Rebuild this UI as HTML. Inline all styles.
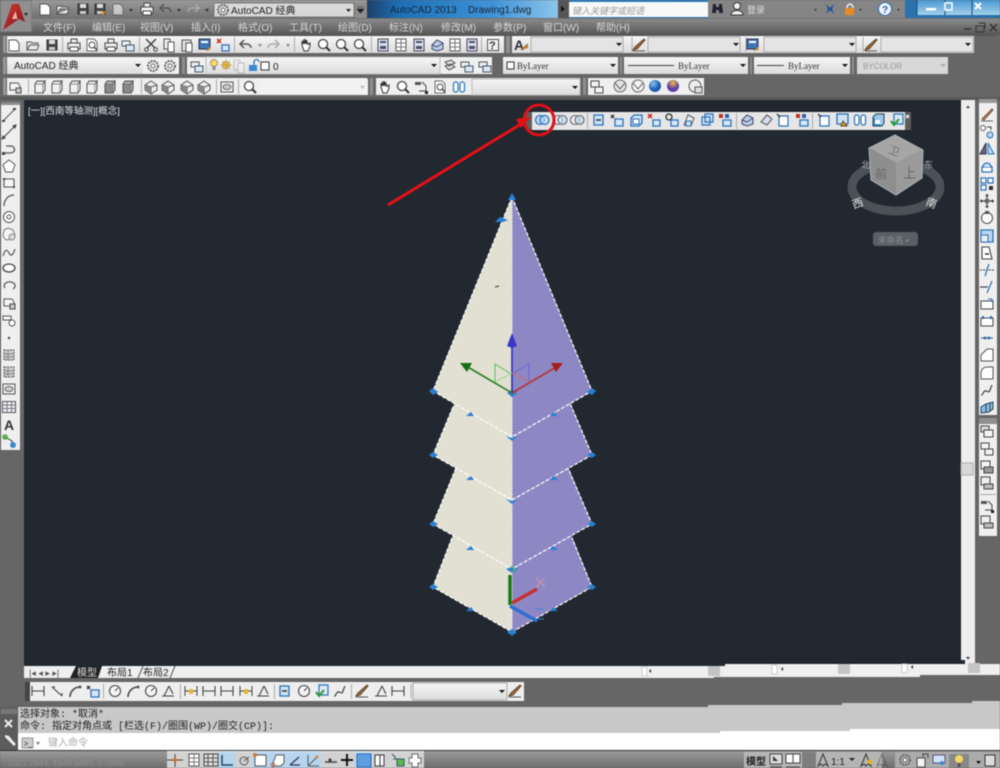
<!DOCTYPE html>
<html><head><meta charset="utf-8"><title>AutoCAD 2013</title>
<style>
html,body{margin:0;padding:0;background:#666;width:1000px;height:768px;overflow:hidden}
svg{display:block;filter:blur(.5px)}
text{font-family:"Liberation Sans","Noto Sans CJK SC",sans-serif}
.m{font-size:10px;fill:#d6d6d6}
.d{font-size:9px;fill:#333;font-family:"Liberation Serif","Noto Sans CJK SC",serif}
.c{font-size:10px;fill:#222;font-family:"Liberation Mono","Noto Sans CJK SC",monospace}
</style></head><body>
<svg width="1000" height="768" viewBox="0 0 1000 768" xmlns="http://www.w3.org/2000/svg">
<defs>
<linearGradient id="gb" x1="0" y1="0" x2="0" y2="1"><stop offset="0" stop-color="#8a8a8a"/><stop offset="1" stop-color="#565656"/></linearGradient>
<linearGradient id="gs" x1="0" y1="0" x2="0" y2="1"><stop offset="0" stop-color="#f6f6f6"/><stop offset="1" stop-color="#dcdcdc"/></linearGradient>
<linearGradient id="gt" x1="0" y1="0" x2="1" y2="0"><stop offset="0" stop-color="#1d3f66"/><stop offset=".05" stop-color="#1c6fb4"/><stop offset=".2" stop-color="#3f93d6"/><stop offset=".3" stop-color="#8cc4ea"/><stop offset=".32" stop-color="#2a7cc0"/><stop offset="1" stop-color="#2b6fa8"/></linearGradient>
<linearGradient id="gw" x1="0" y1="0" x2="0" y2="1"><stop offset="0" stop-color="#4a98d2"/><stop offset="1" stop-color="#a4d0ec"/></linearGradient>
<linearGradient id="ga" x1="0" y1="0" x2="1" y2="1"><stop offset="0" stop-color="#d83a38"/><stop offset="1" stop-color="#7a1414"/></linearGradient>
<linearGradient id="gc" x1="0" y1="0" x2="0" y2="1"><stop offset="0" stop-color="#9a9a9a"/><stop offset="1" stop-color="#6e6e6e"/></linearGradient>
<radialGradient id="sb" cx=".35" cy=".3"><stop offset="0" stop-color="#8fc4f0"/><stop offset="1" stop-color="#1c5fb0"/></radialGradient>
<radialGradient id="sy" cx=".5" cy=".25"><stop offset="0" stop-color="#f5c040"/><stop offset="1" stop-color="#5a3fa8"/></radialGradient>
<g id="doc"><path d="M3 3h7l3 3v8H3z" fill="#fff" stroke="#555"/></g>
<g id="open"><path d="M2 13V5h4l1 1h6v2H5l-3 5h10l2-5" fill="#e8e8e8" stroke="#555"/></g>
<g id="save"><path d="M3 3h10v10H3z" fill="#444" stroke="#333"/><path d="M5 3h6v4H5z" fill="#ddd"/><path d="M5 10h6v3H5z" fill="#ccc"/></g>
<g id="print"><path d="M5 2h6v4H5zM2 6h12v6H2z" fill="#eee" stroke="#444"/><path d="M4 10h8v4H4z" fill="#fff" stroke="#444"/></g>
<g id="prev"><path d="M3 2h7l3 3v9H3z" fill="#fff" stroke="#666"/><circle cx="8" cy="8" r="3" fill="none" stroke="#444"/><path d="M10 10l3 3" stroke="#444" stroke-width="1.5"/></g>
<g id="cut"><path d="M3 2l9 9M13 2L4 11" stroke="#444" stroke-width="1.5" fill="none"/><circle cx="3.500" cy="12.500" r="1.800" fill="none" stroke="#444"/><circle cx="12.500" cy="12.500" r="1.800" fill="none" stroke="#444"/></g>
<g id="copy"><path d="M3 2h6v10H3z" fill="#eee" stroke="#555"/><path d="M7 5h6v10H7z" fill="#fff" stroke="#555"/></g>
<g id="paste"><path d="M3 3h9v11H3z" fill="#ddd" stroke="#555"/><path d="M7 6h6v9H7z" fill="#fff" stroke="#555"/></g>
<g id="match"><path d="M2 2h11v10H2z" fill="#3f76b8" stroke="#334"/><path d="M4 4h7v2H4z" fill="#fff"/><path d="M8 14l6-5-1 4z" fill="#c88a38"/></g>
<g id="undo"><path d="M6 3L2 7l4 4M2 7h7a4 4 0 0 1 4 4" fill="none" stroke="#555" stroke-width="1.500"/></g>
<g id="redo"><path d="M10 3l4 4-4 4M14 7H7a4 4 0 0 0-4 4" fill="none" stroke="#aaa" stroke-width="1.500"/></g>
<g id="hand"><path d="M4 8V4l1.500 3V2.500L7 7V2l1.500 5V3L10 7.500l2-1.500v3l-2 5H6z" fill="#fff" stroke="#333"/></g>
<g id="zoom"><circle cx="7" cy="7" r="4.500" fill="#fff" stroke="#444" stroke-width="1.300"/><path d="M10 10l4 4" stroke="#333" stroke-width="2"/></g>
<g id="box"><path d="M2.500 2.500h11v11h-11z" fill="#f4f4f4" stroke="#555"/></g>
<g id="panel"><path d="M3 2h10v12H3z" fill="#dde" stroke="#445"/><path d="M5 4h6v2H5zM5 9h6v3H5z" fill="#456"/></g>
<g id="grid"><path d="M3 2h10v12H3z" fill="#fff" stroke="#555"/><path d="M3 6h10M3 10h10M8 2v12" stroke="#777"/></g>
<g id="cube"><path d="M3 5h8v9H3z" fill="#f0f0f0" stroke="#555"/><path d="M3 5l2-3h8l-2 3M11 5l2-3v9l-2 3" fill="#ddd" stroke="#555"/></g>
<g id="cubed"><path d="M3 5h8v9H3z" fill="#888" stroke="#555"/><path d="M3 5l2-3h8l-2 3M11 5l2-3v9l-2 3" fill="#aaa" stroke="#555"/></g>
<g id="iso"><path d="M8 2l6 4v5l-6 4-6-4V6z" fill="#eee" stroke="#555"/><path d="M8 8l6-2M8 8L2 6M8 8v7" stroke="#555" fill="none"/><path d="M8 8l-6-2v5l6 4z" fill="#888"/></g>
<g id="brush"><path d="M2 13l4-1 8-9-1-1-9 8z" fill="#b56a2a" stroke="#543"/><path d="M2 14h12" stroke="#555"/></g>
<g id="gear"><circle cx="8" cy="8" r="5" fill="none" stroke="#666" stroke-width="2" stroke-dasharray="2 1"/><circle cx="8" cy="8" r="2" fill="#fff" stroke="#666"/></g>
<g id="layer"><path d="M2 4h8v5H2z" fill="#eee" stroke="#456"/><path d="M6 8h8v6H6z" fill="#dbe8f5" stroke="#456"/></g>
<g id="layer2"><path d="M3 4l6-2 4 3-6 3zM3 8l6-2 4 3-6 3z" fill="#ddd" stroke="#555"/></g>
<g id="venn"><circle cx="6" cy="8" r="4.500" fill="#bcd8f0" stroke="#2a70b8" stroke-width="1.200"/><circle cx="10.500" cy="8" r="4.500" fill="#bcd8f0" fill-opacity=".6" stroke="#2a70b8" stroke-width="1.200"/></g>
<g id="venn2"><circle cx="6" cy="8" r="4.500" fill="#f0f0f0" stroke="#667" stroke-width="1.100"/><circle cx="10.500" cy="8" r="4.500" fill="#c5d5e5" fill-opacity=".7" stroke="#667" stroke-width="1.100"/></g>
<g id="s1"><path d="M3 3h9v10H3z" fill="#cfe3f5" stroke="#2a70b8" stroke-width="1.300"/><path d="M5 8h5" stroke="#333" stroke-width="1.500"/></g>
<g id="s2"><path d="M2 3l3 3M5 3L2 6" stroke="#333" stroke-width="1.300"/><path d="M6 7h8v7H6z" fill="#d8e8f6" stroke="#2a70b8" stroke-width="1.300"/></g>
<g id="s3"><path d="M3 6l3-3h8v8l-3 3H3z" fill="#cfe3f5" stroke="#2a70b8" stroke-width="1.300"/><path d="M5 7h6v5H5z" fill="#fff" stroke="#2a70b8"/></g>
<g id="s4"><path d="M2 2l4 4M6 2L2 6" stroke="#d02020" stroke-width="1.500"/><path d="M7 8h7v6H7z" fill="#d8e8f6" stroke="#2a70b8" stroke-width="1.300"/></g>
<g id="s5"><circle cx="5" cy="5" r="3" fill="none" stroke="#333" stroke-width="1.300"/><path d="M7 8h7v6H7z" fill="#d8e8f6" stroke="#2a70b8" stroke-width="1.300"/></g>
<g id="s6"><path d="M3 13l4-10 6 3-3 8z" fill="#e5eef8" stroke="#555"/><path d="M5 9h5v5H5z" fill="#cfe3f5" stroke="#2a70b8"/></g>
<g id="s7"><path d="M6 2h8v8H6zM3 5h8v8H3z" fill="#cfe3f5" stroke="#2a70b8" stroke-width="1.200"/></g>
<g id="s8"><path d="M2 2h4v4H2z" fill="#c03020"/><path d="M8 2h4v4H8z" fill="#3060b0"/><path d="M6 8h8v6H6z" fill="#d8e8f6" stroke="#2a70b8" stroke-width="1.300"/></g>
<g id="s9"><path d="M3 8l5-5 6 3v6l-6 2-5-2z" fill="#b8d0e8" stroke="#446"/><path d="M3 8l5 2 6-4" fill="none" stroke="#446"/></g>
<g id="s10"><path d="M3 10l6-7 5 4-5 6z" fill="#d5dde8" stroke="#555"/></g>
<g id="s11"><path d="M4 4h9v10H4z" fill="#fff" stroke="#2a70b8" stroke-width="1.200"/><path d="M2 2l3 3" stroke="#333" stroke-width="1.300"/></g>
<g id="s12"><path d="M3 2h11v10H3z" fill="#cfe3f5" stroke="#2a70b8" stroke-width="1.300"/><path d="M9 9l4 5H7z" fill="#e8a020" stroke="#642"/></g>
<g id="s13"><rect x="2.500" y="3" width="4.500" height="10" rx="2" fill="#fff" stroke="#2a70b8" stroke-width="1.200"/><rect x="9" y="3" width="4.500" height="10" rx="2" fill="#fff" stroke="#2a70b8" stroke-width="1.200"/></g>
<g id="s14"><path d="M3 5h9v9H3z" fill="#3a8ad0" stroke="#245"/><path d="M3 5l3-3h8v9l-2 3" fill="#9cc6ea" stroke="#245"/><path d="M5 8h5v4H5z" fill="#fff"/></g>
<g id="s15"><path d="M5 2h9v10H5z" fill="#dceaf6" stroke="#2a70b8" stroke-width="1.200"/><path d="M2 9l3 4 5-6" fill="none" stroke="#2a9a30" stroke-width="2"/></g>
<g id="hline"><path d="M2 3v10M14 3v10M2 8h12" stroke="#444" fill="none" stroke-width="1.100"/></g>
<g id="dang"><path d="M3 4l10 9M3 4l3 0M13 13l0-3" stroke="#444" fill="none" stroke-width="1.100"/></g>
<g id="darc"><path d="M3 14a10 10 0 0 1 10-10" stroke="#444" fill="none" stroke-width="1.500"/><circle cx="13" cy="4" r="1.500" fill="#555"/></g>
<g id="circ"><circle cx="8" cy="8" r="5.500" fill="#f4f4f4" stroke="#444" stroke-width="1.100"/><path d="M8 8l3-3" stroke="#444"/></g>
<g id="tri"><path d="M2 13h12M9 3L4 13M9 3l4 8" stroke="#444" fill="none" stroke-width="1.100"/></g>
<g id="hy"><path d="M2 3v10M14 3v10M2 8h12" stroke="#444" fill="none"/><path d="M6 6h4v5H6z" fill="#e8b830"/></g>
<g id="l1"><path d="M2 14L14 2" stroke="#555" stroke-width="1"/><path d="M1 13h3v2H1zM12 1h3v2h-3z" fill="#444"/></g>
<g id="l2"><path d="M3 13L13 3M1 15l3-1-2-2zM15 1l-3 1 2 2z" stroke="#444" stroke-width="1" fill="#444"/></g>
<g id="l3"><path d="M2 12h8a3 3 0 0 0 0-7H5" fill="none" stroke="#555" stroke-width="1.300"/><path d="M1 11h3v3H1z" fill="#444"/></g>
<g id="l4"><path d="M8 2l6 4.500-2.500 7.500h-7L2 6.500z" fill="#fff" stroke="#555" stroke-width="1"/></g>
<g id="l5"><path d="M3 4h10v8H3z" fill="#f6f6f6" stroke="#555" stroke-width="1.100"/><path d="M2 3h2v2H2zM12 11h2v2h-2z" fill="#444"/></g>
<g id="l6"><path d="M3 14C3 8 7 3 13 3" fill="none" stroke="#555" stroke-width="1.300"/></g>
<g id="l7"><circle cx="8" cy="8" r="5.500" fill="#fff" stroke="#555"/><circle cx="8" cy="8" r="2" fill="none" stroke="#555"/></g>
<g id="l8"><path d="M3 4l4-2 5 2 2 5-3 4-6 1-3-4z" fill="#f6f6f6" stroke="#777"/><circle cx="11" cy="11" r="3" fill="#ddd" stroke="#888"/></g>
<g id="l9"><path d="M2 11c2-7 4-7 6-3s4 2 6-4" fill="none" stroke="#555" stroke-width="1.200"/></g>
<g id="l10"><ellipse cx="8" cy="8" rx="6" ry="4" fill="#fff" stroke="#444" stroke-width="1.300"/></g>
<g id="l11"><path d="M12 12a5.500 4 0 1 0-8-1" fill="none" stroke="#555" stroke-width="1.200"/></g>
<g id="l12"><path d="M3 11V4h8l2 3v4z" fill="#f6f6f6" stroke="#555"/><path d="M9 9h5v5H9z" fill="#ccc" stroke="#444"/></g>
<g id="l13"><path d="M2 8V4h8v4z" fill="#f6f6f6" stroke="#555"/><circle cx="11" cy="11" r="3" fill="#fff" stroke="#555"/></g>
<g id="l14"><circle cx="8" cy="8" r="1.200" fill="#444"/></g>
<g id="l15"><path d="M3 3h10v10H3z" fill="#ccc" stroke="#555" stroke-dasharray="2 1"/><path d="M3 7h10M3 10h10M7 3v10" stroke="#888"/></g>
<g id="l16"><path d="M2 3h12v10H2z" fill="#eee" stroke="#555"/><ellipse cx="8" cy="8" rx="4" ry="2.500" fill="#ccc" stroke="#666"/></g>
<g id="l17"><path d="M1.500 2.500h13v11h-13z" fill="#f0f0f0" stroke="#555"/><path d="M1.500 6h13M1.500 9.500h13M6 2.500v11M10.500 2.500v11" stroke="#778" fill="none"/></g>
<g id="l18"><circle cx="4" cy="4" r="2.800" fill="#58b048"/><path d="M6 5l5 3v3" fill="none" stroke="#333"/><circle cx="12" cy="12" r="3" fill="#3a88d0"/></g>
<g id="r1"><path d="M2 14h12" stroke="#666"/><path d="M3 12L13 2l1 1-9 10z" fill="#c88450" stroke="#754"/></g>
<g id="r2"><circle cx="4" cy="4" r="2.500" fill="#fff" stroke="#555"/><circle cx="11" cy="11" r="3" fill="#bcd8f0" stroke="#2a70b8"/><path d="M8 3h4v3" fill="none" stroke="#444"/></g>
<g id="r3"><path d="M7 2v11L1 13z" fill="#668" stroke="#334"/><path d="M9 2v11h6z" fill="#bcd8f0" stroke="#2a70b8"/></g>
<g id="r4"><path d="M3 8h10v5H3z" fill="#fff" stroke="#2a70b8" stroke-width="1.300"/><path d="M4 8a4 4 0 0 1 8 0" fill="#cfe3f5" stroke="#2a70b8" stroke-width="1.300"/></g>
<g id="r5"><path d="M2 2h5v5H2zM9 2h5v5H9zM2 9h5v5H2z" fill="#fff" stroke="#2a70b8" stroke-width="1.200"/><path d="M10 10h4v4h-4z" fill="#333"/></g>
<g id="r6"><path d="M8 1v14M1 8h14" stroke="#444" stroke-width="1.200"/><circle cx="8" cy="8" r="2.500" fill="#666"/><path d="M6 3l2-2 2 2zM6 13l2 2 2-2zM3 6L1 8l2 2zM13 6l2 2-2 2z" fill="#333"/></g>
<g id="r7"><circle cx="8" cy="8" r="5.500" fill="#fff" stroke="#555" stroke-width="1.100"/><path d="M6 1h4v3H6z" fill="#555"/></g>
<g id="r8"><path d="M2 2h12v12H2z" fill="#bcd8f0" stroke="#2a70b8" stroke-width="1.300"/><path d="M2 7h7v7H2z" fill="#eee" stroke="#2a70b8"/></g>
<g id="r9"><path d="M3 2h7l3 12H3z" fill="#fff" stroke="#444" stroke-width="1.100"/><path d="M6 9h4" stroke="#333" stroke-width="1.500"/></g>
<g id="r10"><path d="M1 8h14" stroke="#444" stroke-dasharray="2 1"/><path d="M10 2L6 14" stroke="#2a70b8" stroke-width="1.200"/></g>
<g id="r11"><path d="M1 8h8" stroke="#444" stroke-width="1.200"/><path d="M13 2L8 14" stroke="#2a70b8" stroke-width="1.200"/></g>
<g id="r12"><path d="M2 13V5h12v8z" fill="#fff" stroke="#444"/><path d="M9 3h4v3" fill="none" stroke="#2a70b8"/></g>
<g id="r13"><path d="M2 13V5h12v8z" fill="#fff" stroke="#444"/><path d="M3 3h2v3H3zM11 3h2v3h-2z" fill="#2a70b8"/></g>
<g id="r14"><path d="M2 8h12" stroke="#555"/><circle cx="6" cy="8" r="1.500" fill="#2a70b8"/><circle cx="10" cy="8" r="1.500" fill="#2a70b8"/></g>
<g id="r15"><path d="M2 14V8l6-6h6v12z" fill="#fff" stroke="#555"/></g>
<g id="r16"><path d="M2 14V8a6 6 0 0 1 6-6h6v12z" fill="#fff" stroke="#555"/></g>
<g id="r17"><path d="M2 13c2 1 2-5 5-4s3 2 4-1 1-3 2-5" fill="none" stroke="#444" stroke-width="1.200"/></g>
<g id="r18"><path d="M2 8l5-3 7-2v7l-4 3-8 1z" fill="#8cbce6" stroke="#245"/><path d="M7 5v8M11 4v8" stroke="#245"/></g>
<g id="o1"><path d="M2 2h8v6H2z" fill="#ddd" stroke="#444"/><path d="M5 6h9v7H5z" fill="#f4f4f4" stroke="#444"/></g>
<g id="o2"><path d="M2 2h8v6H2z" fill="#f4f4f4" stroke="#444"/><path d="M6 8h8v6H6z" fill="#f4f4f4" stroke="#444"/></g>
<g id="o3"><path d="M2 2h9v8H2z" fill="#f4f4f4" stroke="#444"/><path d="M5 8h9v6H5z" fill="#999" stroke="#444"/></g>
<g id="s0"><path d="M2 2h9v8H2z" fill="none" stroke="#444"/><path d="M5 9h9v5H5z" fill="#bbb" stroke="#444"/></g>
<g id="s16"><path d="M2 3h6v3H2z" fill="#555"/><path d="M9 3l4 4v5H6" fill="none" stroke="#444"/><path d="M12 12h3v3h-3z" fill="#222"/></g>
<g id="ca"><path d="M3 14L8 2l5 12-3-2-2 2-2-2z" fill="none" stroke="#444" stroke-width="1.200"/></g>
<g id="tab"><path d="M0 0h18v18H0z" fill="#d2d2d2"/><path d="M0 0h18v1H0z" fill="#f0f0f0"/></g>
<g id="tabb"><path d="M0 0h18v18H0z" fill="#b7d6ee"/><path d="M0 0h18v1H0z" fill="#e8f4fc"/></g>
</defs>

<rect width="1000" height="768" fill="#666"/>
<rect width="1000" height="20" fill="url(#gc)"/>
<rect x="367" y="0" width="633" height="18" fill="url(#gt)"/>
<rect x="0" y="19" width="1000" height="16" fill="url(#gb)"/>
<path d="M0 0h32v32H0z" fill="#7d7d7d"/><path d="M1 1h30v30H1z" fill="#aaa" fill-opacity=".4"/>
<path d="M3 30L12 4h7l6 18-6-3z" fill="url(#ga)"/><path d="M12 19l3.500-8 2 8z" fill="#eeb0a8"/><path d="M24 13h4l-2 3z" fill="#222"/>
<use href="#doc" x="37" y="1"/><use href="#open" x="55" y="1"/><use href="#save" x="75" y="1"/><use href="#save" x="92" y="1"/><path d="M101 11l5 1-3 3z" fill="#e8a020"/>
<use href="#doc" x="110" y="1" opacity=".55"/>
<path d="M129 9h4l-2 3z" fill="#333"/>
<use href="#print" x="139" y="1"/>
<use href="#undo" x="158" y="1"/><path d="M177 9h4l-2 3z" fill="#333"/>
<use href="#redo" x="185" y="1"/><path d="M205 9h4l-2 3z" fill="#333"/>
<rect x="214" y="3" width="140" height="14" fill="#d9d9d9" stroke="#777"/>
<use href="#gear" x="215" y="2"/>
<text x="231" y="14" font-size="10" fill="#222">AutoCAD 经典</text>
<path d="M346 9h5l-2.500 3z" fill="#222"/>
<path d="M355 3h12v15h-12z" fill="#8d8d8d"/><path d="M357 7h7M357 9h7l-3.500 4z" fill="#222" stroke="#222" stroke-width=".6"/>
<text x="390" y="13" font-size="10" fill="#17263a">AutoCAD 2013</text>
<text x="468" y="13" font-size="10" fill="#17263a">Drawing1.dwg</text>
<rect x="558" y="0" width="11" height="18" fill="#555"/><path d="M561 6l4 3-4 3z" fill="#111"/>
<rect x="569" y="2" width="139" height="15" fill="#f8f8f8"/>
<text x="572" y="14" font-size="9" fill="#999" font-style="italic">键入关键字或短语</text>
<rect x="708" y="0" width="197" height="18" fill="#858585"/>
<path d="M713 4h3v9h-4zM719 4h3l1 9h-4zM716 7h3v3h-3z" fill="#223" />
<circle cx="737" cy="6" r="3.500" fill="#f2f2f2" stroke="#333"/><path d="M731 15c0-6 12-6 12 0z" fill="#f2f2f2" stroke="#333"/>
<text x="747" y="13" font-size="9" fill="#ddd">登录</text>
<path d="M814 9h3l-1.500 2z" fill="#333"/>
<path d="M826 4l4 4 4-4-2 5 2 5-4-4-4 4 2-5z" fill="#1e4fa0"/>
<path d="M845 8h9v7h-9z" fill="#e88a20"/><path d="M847 8a3 4 0 0 1 6 0" fill="none" stroke="#eee" stroke-width="1.500"/>
<path d="M859 9h3l-1.500 2z" fill="#333"/>
<circle cx="885" cy="9" r="6.500" fill="#eef4fb" stroke="#3a70b0"/><text x="882" y="13" font-size="10" font-weight="bold" fill="#2a60a8">?</text>
<path d="M897 9h3l-1.500 2z" fill="#333"/>
<rect x="917" y="0" width="83" height="15" fill="url(#gw)"/>
<path d="M917 0v15M945 0v15M972 0v15" stroke="#174a78"/>
<rect x="926" y="8" width="10" height="2.500" fill="#fff"/><rect x="945" y="3" width="7" height="7" fill="none" stroke="#fff" stroke-width="1.500"/><path d="M975 3l6 6M981 3l-6 6" stroke="#fff" stroke-width="2"/>

<text class="m" x="43" y="31">文件(F)</text><text class="m" x="92" y="31">编辑(E)</text><text class="m" x="140" y="31">视图(V)</text><text class="m" x="191" y="31">插入(I)</text><text class="m" x="238" y="31">格式(O)</text><text class="m" x="289" y="31">工具(T)</text><text class="m" x="338" y="31">绘图(D)</text><text class="m" x="389" y="31">标注(N)</text><text class="m" x="441" y="31">修改(M)</text><text class="m" x="493" y="31">参数(P)</text><text class="m" x="543" y="31">窗口(W)</text><text class="m" x="596" y="31">帮助(H)</text>
<path d="M964 29h7" stroke="#333" stroke-width="1.500"/><path d="M976 26h8v6h-8zM979 23h6v5" fill="none" stroke="#333"/><path d="M990 24l7 7M997 24l-7 7" stroke="#333" stroke-width="1.500"/>

<rect x="7" y="36" width="497" height="17" fill="url(#gs)"/>
<rect x="512" y="36" width="462" height="17" fill="url(#gs)"/>
<path d="M62.500 37v15M139.500 37v15M234.500 37v15M294.500 37v15M371.500 37v15M481.500 37v15M632 37v15M746 37v15M863 37v15" stroke="#aaa"/>
<use href="#doc" x="6" y="37"/><use href="#open" x="25" y="37"/><use href="#save" x="44" y="37"/><use href="#print" x="66" y="37"/><use href="#prev" x="84" y="37"/><use href="#print" x="103" y="37"/><use href="#layer" x="120" y="37"/><use href="#cut" x="143" y="37"/><use href="#copy" x="161" y="37"/><use href="#paste" x="179" y="37"/><use href="#match" x="197" y="37"/><use href="#s4" x="215" y="37"/><use href="#undo" x="238" y="37"/><use href="#redo" x="265" y="37"/><use href="#hand" x="298" y="37"/><use href="#zoom" x="316" y="37"/><use href="#zoom" x="334" y="37"/><use href="#zoom" x="352" y="37"/><use href="#panel" x="375" y="37"/><use href="#grid" x="393" y="37"/><use href="#panel" x="411" y="37"/><use href="#s9" x="429" y="37"/><use href="#grid" x="447" y="37"/><use href="#panel" x="464" y="37"/><use href="#box" x="485" y="37"/>
<path d="M258 44h4l-2 3zM286 44h4l-2 3z" fill="#888"/>
<text x="489" y="49" font-size="11" font-weight="bold" fill="#333">?</text>
<text x="514" y="50" font-size="14" font-weight="bold" fill="#333" font-family="Liberation Serif">A</text><path d="M520 50l8-7v5z" fill="#b87830"/>
<rect x="531" y="37" width="92" height="15" fill="#e4e4e4" stroke="#aaa"/><path d="M616 43h6l-3 3z" fill="#111"/>
<use href="#brush" x="631" y="37"/>
<rect x="648" y="37" width="92" height="15" fill="#e4e4e4" stroke="#aaa"/><path d="M733 43h6l-3 3z" fill="#111"/>
<use href="#match" x="745" y="37"/>
<rect x="764" y="37" width="92" height="15" fill="#e4e4e4" stroke="#aaa"/><path d="M849 43h6l-3 3z" fill="#111"/>
<use href="#brush" x="863" y="37"/>
<rect x="881" y="37" width="92" height="15" fill="#e4e4e4" stroke="#aaa"/><path d="M965 43h6l-3 3z" fill="#111"/>

<rect x="7" y="57" width="172" height="17" fill="#f0f0f0"/>
<rect x="7" y="57" width="136" height="17" fill="url(#gs)"/>
<text x="14" y="69" font-size="10" fill="#222">AutoCAD 经典</text><path d="M135 64h6l-3 3z" fill="#111"/>
<use href="#gear" x="145" y="58"/><use href="#gear" x="162" y="58"/>
<rect x="187" y="57" width="305" height="17" fill="#f0f0f0"/>
<use href="#layer" x="189" y="58"/>
<rect x="206" y="57" width="234" height="17" fill="url(#gs)" stroke="#bbb"/>
<circle cx="214" cy="63" r="3.500" fill="#f3dd60" stroke="#a88"/><rect x="212.500" y="66" width="3" height="4" fill="#888"/>
<circle cx="226" cy="65" r="3.500" fill="#f3d040" stroke="#b88"/><path d="M226 59v12M220 65h12M222 61l8 8M230 61l-8 8" stroke="#c8a030" stroke-width=".7"/>
<use href="#copy" x="231" y="58" opacity=".3"/>
<path d="M249 65h8v6h-8z" fill="#3a88d0"/><path d="M254 65v-3a2.500 2.500 0 0 1 5 0" fill="none" stroke="#3a70b0" stroke-width="1.300"/>
<rect x="261" y="62" width="8" height="8" fill="#fff" stroke="#333"/>
<text x="273" y="70" font-size="10" fill="#222">0</text><path d="M431 64h6l-3 3z" fill="#111"/>
<use href="#layer2" x="442" y="58"/><use href="#layer" x="459" y="58"/><use href="#layer" x="477" y="58"/>
<rect x="503" y="57" width="115" height="17" fill="url(#gs)"/>
<rect x="507" y="62" width="7" height="7" fill="#fff" stroke="#333"/><text class="d" x="517" y="69">ByLayer</text><path d="M610 64h6l-3 3z" fill="#111"/>
<rect x="624" y="57" width="124" height="17" fill="url(#gs)"/>
<path d="M628 65.500h46" stroke="#444"/><text class="d" x="678" y="69">ByLayer</text><path d="M740 64h6l-3 3z" fill="#111"/>
<rect x="754" y="57" width="96" height="17" fill="url(#gs)"/>
<path d="M757 65.500h27" stroke="#444"/><text class="d" x="788" y="69">ByLayer</text><path d="M842 64h6l-3 3z" fill="#111"/>
<rect x="857" y="57" width="91" height="17" fill="#d8d8d8"/>
<text x="863" y="69" font-size="8" fill="#999" font-family="Liberation Serif">BYCOLOR</text><path d="M940 64h6l-3 3z" fill="#aaa"/>

<rect x="7" y="78" width="360" height="17" fill="#efefef"/>
<path d="M28.500 79v15M141.500 79v15M216.500 79v15M238.500 79v15" stroke="#aaa"/>
<use href="#l12" x="7" y="79"/>
<use href="#cube" x="32" y="79"/><use href="#cube" x="49" y="79"/><use href="#cube" x="67" y="79"/><use href="#cube" x="84" y="79"/><use href="#cubed" x="102" y="79"/><use href="#cubed" x="120" y="79"/>
<use href="#iso" x="143" y="79"/><use href="#iso" x="160" y="79"/><use href="#iso" x="179" y="79"/><use href="#iso" x="196" y="79"/>
<use href="#l16" x="219" y="79"/><use href="#zoom" x="242" y="79"/>
<rect x="260" y="79" width="108" height="16" fill="#f2f2f2"/><path d="M360 86h5l-2.500 3z" fill="#bbb"/>
<rect x="376" y="78" width="204" height="17" fill="#efefef"/>
<use href="#hand" x="377" y="79"/><use href="#zoom" x="395" y="79"/><use href="#s16" x="413" y="79"/><use href="#prev" x="432" y="79"/><use href="#s13" x="451" y="79"/>
<rect x="472" y="79" width="108" height="16" fill="url(#gs)" stroke="#bbb"/><path d="M572 86h6l-3 3z" fill="#111"/>
<rect x="588" y="78" width="116" height="17" fill="#efefef"/>
<use href="#o2" x="589" y="79"/>
<circle cx="620" cy="86" r="6" fill="#e4e4e4" stroke="#666"/><path d="M615 83l5 6 5-6" fill="none" stroke="#666"/>
<circle cx="638" cy="86" r="6" fill="#f4f4f4" stroke="#666"/><path d="M633 83l5 6 5-6" fill="none" stroke="#666"/>
<circle cx="655" cy="86" r="6" fill="url(#sb)"/><circle cx="673" cy="86" r="6" fill="url(#sy)"/>
<circle cx="695" cy="86" r="6" fill="#eee" stroke="#555"/><rect x="695" y="87" width="7" height="6" fill="#ddd" stroke="#555"/>
<path d="M7 35.500h990" stroke="#555"/>

<path d="M3 36h3v17H3zM3 57h3v17H3zM3 78h3v17H3z" fill="#999"/>
<path d="M506 36h4v17h-4zM182 57h3v17h-3zM620 57h2v17h-2zM750 57h2v17h-2zM852 57h2v17h-2zM370 78h3v17h-3zM583 78h3v17h-3z" fill="#8f8f8f"/>

<rect x="24" y="100" width="937" height="566" fill="#212830"/>
<rect x="0" y="97" width="1000" height="3" fill="#5a5a5a"/>
<text x="28" y="114" font-size="9.500" fill="#e0e0e0">[一][西南等轴测][概念]</text>

<path d="M961 100h14v566h-14z" fill="#eee"/>
<path d="M966 108l2-2.500 2 2.500z" fill="#333"/>
<path d="M966 657l2 2.500 2-2.500z" fill="#333"/>
<rect x="961" y="463" width="12" height="12" fill="#d8d8d8" stroke="#aaa"/>

<rect x="527" y="112" width="383" height="18" fill="#e6e6e6"/>
<rect x="526" y="112" width="6" height="18" fill="#5d5d5d"/>
<rect x="905" y="112" width="6" height="18" fill="#5d5d5d"/>
<path d="M906 115l3 3M909 115l-3 3" stroke="#fff" stroke-width="1.200"/>
<path d="M587.500 113v16M736.500 113v16M812.500 113v16" stroke="#aaa"/>
<use href="#venn" x="534" y="112"/><use href="#venn2" x="552" y="112"/><use href="#venn2" x="569" y="112"/>
<use href="#s1" x="591" y="112"/><use href="#s2" x="609" y="112"/><use href="#s3" x="628" y="112"/><use href="#s4" x="646" y="112"/><use href="#s5" x="664" y="112"/><use href="#s6" x="681" y="112"/><use href="#s7" x="699" y="112"/><use href="#s8" x="717" y="112"/>
<use href="#s9" x="739" y="112"/><use href="#s10" x="758" y="112"/><use href="#s11" x="775" y="112"/><use href="#s8" x="794" y="112"/>
<use href="#s11" x="816" y="112"/><use href="#s12" x="834" y="112"/><use href="#s13" x="852" y="112"/><use href="#s14" x="870" y="112"/><use href="#s15" x="889" y="112"/>

<polygon points="512,383 433,587 512,632" fill="#e1e0d2"/><polygon points="512,383 592,587 512,632" fill="#8d88c4"/>
<path d="M452 538L433 587 512 632 592 587 572 538" fill="none" stroke="#fff" stroke-width="1.200" stroke-dasharray="4 1.500"/>
<polygon points="512,332 433,524 512,569" fill="#e1e0d2"/><polygon points="512,332 592,524 512,569" fill="#8d88c4"/>
<path d="M456 468L433 524 512 569 592 524 568 468" fill="none" stroke="#fff" stroke-width="1.200" stroke-dasharray="4 1.500"/>
<polygon points="512,265 433,455 512,500" fill="#e1e0d2"/><polygon points="512,265 592,455 512,500" fill="#8d88c4"/>
<path d="M453 407L433 455 512 500 592 455 570 403" fill="none" stroke="#fff" stroke-width="1.200" stroke-dasharray="4 1.500"/>
<polygon points="512,197 433,391 512,437" fill="#e1e0d2"/><polygon points="512,197 592,391 512,437" fill="#8d88c4"/>
<path d="M512 197L433 391 512 437 592 391Z" fill="none" stroke="#fff" stroke-width="1.200" stroke-dasharray="4 1.500"/>
<path d="M512 197V632" stroke="#fff" stroke-dasharray="1.500 1.500" stroke-width="1.200" opacity=".85"/>
<path d="M495 287l4-1" stroke="#555" stroke-width="1.200"/>
<g fill="#2a7fd0">
<path d="M512 193l4 7h-8z"/><path d="M495 222l5-5 8 3-5 2z"/>
<path d="M429 391l4-3 5 4-5 3z"/><path d="M596 391l-4-3-5 4 5 3z"/>
<path d="M507 393l5-3 5 3-5 4z"/>
<path d="M466 416l5-4 3 4zM558 416l-5-4-3 4z"/>
<path d="M506 436l6 2 6-2-6 5z"/>
<path d="M429 455l4-3 5 3-5 3zM596 455l-4-3-5 3 5 3z"/>
<path d="M466 480l5-4 3 4zM558 480l-5-4-3 4z"/>
<path d="M506 499l6 2 6-2-6 5z"/>
<path d="M429 524l4-3 5 3-5 3zM596 524l-4-3-5 3 5 3z"/>
<path d="M466 550l5-4 3 4zM558 550l-5-4-3 4z"/>
<path d="M506 569l6-2 6 2-6 4z"/>
<path d="M429 587l4-3 5 3-5 3zM596 587l-4-3-5 3 5 3z"/>
<path d="M466 611l5-4 3 4zM558 611l-5-4-3 4z"/>
<path d="M507 632l5-3 5 3-5 4z"/>
</g>
<path d="M512 393V345" stroke="#2c2cc0" stroke-width="1.600"/><path d="M512 333l5 13-5 2-5-2z" fill="#3a38c8"/>
<path d="M512 393l-46-27" stroke="#2a7a24" stroke-width="1.600"/><path d="M460 363h12l-5 9z" fill="#157015"/>
<path d="M512 393l46-27" stroke="#b83030" stroke-width="1.600"/><path d="M563 363h-12l5 9z" fill="#a81e1e"/>
<path d="M495 382v-18l16 10" fill="none" stroke="#5abf5a"/><path d="M495 382l17-9" stroke="#9ed68e"/>
<path d="M529 382v-18l-17 10" fill="none" stroke="#6a62d8"/><path d="M529 382l-17-9" stroke="#c96a78"/>
<path d="M510 575v30" stroke="#187a18" stroke-width="3.500"/>
<path d="M512 603l25-14" stroke="#c83030" stroke-width="3.500"/>
<path d="M510 606l27 15" stroke="#2a70d0" stroke-width="3.500"/>
<path d="M536 578l9 9M545 578l-9 9" stroke="#d09aa8"/>
<path d="M535 609h8M538 619h6" stroke="#3a80d8"/>
<path d="M511 566l4 3-4 3" stroke="#6ac06a" fill="none"/>

<path d="M388 205L521 124" stroke="#e81018" stroke-width="3"/>
<path d="M531 117l-15 2 5 9z" fill="#e81018"/>
<circle cx="539" cy="120" r="15" fill="none" stroke="#e01018" stroke-width="3"/>

<ellipse cx="896" cy="187" rx="44" ry="24" fill="none" stroke="#4b5157" stroke-width="9"/>
<path d="M895 135l28 15-27 13-27-15z" fill="#a6a6a6"/>
<path d="M869 148l27 15v32l-25-15z" fill="#8e8e8e"/>
<path d="M923 150l-27 13v32l26-17z" fill="#9a9a9a"/>
<path d="M895 135l28 15-1 28-26 17-25-15-2-32z" fill="none" stroke="#b5b5b5"/>
<text x="889" y="155" font-size="11" fill="#777" transform="rotate(20 895 150)">卫</text>
<text x="875" y="178" font-size="12" fill="#666">前</text>
<text x="903" y="178" font-size="13" fill="#666">上</text>
<text x="852" y="207" font-size="11" fill="#e0e0e0" transform="rotate(-20 858 203)">西</text>
<text x="926" y="207" font-size="11" fill="#e0e0e0" transform="rotate(20 932 203)">南</text>
<text x="861" y="168" font-size="9" fill="#aaa">北</text>
<text x="924" y="168" font-size="9" fill="#aaa">东</text>
<rect x="873" y="232" width="45" height="14" rx="3" fill="#5b6066"/>
<text x="878" y="243" font-size="8.500" fill="#8a8e92">未命名 ▪</text>

<rect x="1" y="105" width="19" height="345" fill="#efefef"/><rect x="1" y="102" width="19" height="3" fill="#8a8a8a"/>
<use href="#l1" x="1" y="107"/><use href="#l2" x="1" y="124"/><use href="#l3" x="1" y="141"/><use href="#l4" x="1" y="158"/><use href="#l5" x="1" y="175"/><use href="#l6" x="1" y="192"/><use href="#l7" x="1" y="209"/><use href="#l8" x="1" y="226"/><use href="#l9" x="1" y="245"/><use href="#l10" x="1" y="260"/><use href="#l11" x="1" y="277"/><use href="#l12" x="1" y="295"/><use href="#l13" x="1" y="312"/><use href="#l14" x="1" y="330"/><use href="#l15" x="1" y="347"/><use href="#l15" x="1" y="364"/><use href="#l16" x="1" y="381"/><use href="#l17" x="1" y="399"/>
<text x="4" y="430" font-size="14" font-weight="bold" fill="#333">A</text>
<use href="#l18" x="1" y="433"/>

<rect x="979" y="102" width="18" height="313" fill="#efefef"/><rect x="979" y="99" width="18" height="4" fill="#999"/>
<use href="#r1" x="979" y="107"/><use href="#r2" x="979" y="124"/><use href="#r3" x="979" y="141"/><use href="#r4" x="979" y="159"/><use href="#r5" x="979" y="176"/><use href="#r6" x="979" y="193"/><use href="#r7" x="979" y="210"/><use href="#r8" x="979" y="228"/><use href="#r9" x="979" y="245"/><use href="#r10" x="979" y="262"/><use href="#r11" x="979" y="279"/><use href="#r12" x="979" y="296"/><use href="#r13" x="979" y="313"/><use href="#r14" x="979" y="330"/><use href="#r15" x="979" y="347"/><use href="#r16" x="979" y="365"/><use href="#r17" x="979" y="382"/><use href="#r18" x="979" y="399"/>
<rect x="979" y="418" width="18" height="6" fill="#909090"/>
<rect x="979" y="424" width="18" height="112" fill="#efefef"/>
<use href="#o1" x="979" y="424"/><use href="#o2" x="979" y="441"/><use href="#o3" x="979" y="459"/><use href="#s0" x="979" y="475"/>
<path d="M980 494.500h16" stroke="#aaa"/>
<use href="#s16" x="979" y="498"/><use href="#s0" x="979" y="514"/>

<path d="M24 666H725V664H960V663H1000V675H920V677H714V678H24Z" fill="#efefef"/>
<path d="M725 664h240v-4h-240z" fill="#212830"/>
<path d="M975 660h25v4h-25z" fill="#666"/>
<text x="29" y="676" font-size="9" fill="#555">|◂ ◂ ▸ ▸|</text>
<path d="M70 678l6-12h26l-4 12z" fill="#222"/>
<text x="77" y="676" font-size="10" fill="#ddd">模型</text>
<text x="107" y="676" font-size="10" fill="#222">布局1</text><path d="M138 678l5-12" stroke="#555"/>
<text x="143" y="676" font-size="10" fill="#222">布局2</text><path d="M170 678l5-12" stroke="#555"/>
<rect x="642" y="667" width="5" height="9" fill="#fff" stroke="#ccc"/><path d="M651 669v4l-2-2z" fill="#222"/>
<rect x="708" y="666" width="12" height="10" fill="#c4c4c4"/>
<rect x="772" y="665" width="5" height="9" fill="#fff" stroke="#ccc"/><path d="M783 667v4l-2-2z" fill="#222"/>
<rect x="838" y="664" width="12" height="10" fill="#c4c4c4"/>
<rect x="902" y="664" width="5" height="9" fill="#fff" stroke="#ccc"/><path d="M913 665v4l-2-2z" fill="#222"/>
<rect x="968" y="663" width="12" height="10" fill="#c4c4c4"/>

<rect x="25" y="682" width="5" height="19" fill="#444"/>
<rect x="30" y="682" width="494" height="19" fill="#eee"/>
<path d="M103.500 684v15M180.500 684v15M274.500 684v15M351.500 684v15M411 684v15" stroke="#aaa"/>
<use href="#hline" x="30" y="683"/><use href="#dang" x="49" y="683"/><use href="#darc" x="67" y="683"/><use href="#s2" x="85" y="683"/><use href="#circ" x="107" y="683"/><use href="#darc" x="125" y="683"/><use href="#circ" x="143" y="683"/><use href="#tri" x="160" y="683"/><use href="#hy" x="183" y="683"/><use href="#hline" x="201" y="683"/><use href="#hline" x="219" y="683"/><use href="#hy" x="238" y="683"/><use href="#tri" x="255" y="683"/><use href="#s1" x="277" y="683"/><use href="#circ" x="296" y="683"/><use href="#s15" x="314" y="683"/><use href="#r17" x="332" y="683"/><use href="#brush" x="354" y="683"/><use href="#tri" x="373" y="683"/><use href="#hline" x="390" y="683"/>
<rect x="413" y="683" width="94" height="17" fill="url(#gs)" stroke="#aaa"/><path d="M499 690h6l-3 3z" fill="#111"/>
<use href="#brush" x="507" y="683"/>

<path d="M18 707H708V705H842V703H972V701H1000V729H850V731H720V733H18Z" fill="#c8c8c8"/>
<path d="M18 733H720V731H850V729H1000V750H18Z" fill="#fff"/>
<rect x="0" y="707" width="18" height="44" fill="#5c5c5c"/>
<rect x="1" y="709" width="16" height="5" fill="#777"/>
<path d="M5 720l7 7M12 720l-7 7" stroke="#eee" stroke-width="2"/>
<path d="M5 737l6 6 3 3 2-2-3-3-4-5-4-1z" fill="#eee"/>
<text class="c" x="20" y="717">选择对象: *取消*</text>
<text class="c" x="20" y="729">命令: 指定对角点或 [栏选(F)/圈围(WP)/圈交(CP)]:</text>
<rect x="22" y="738" width="11" height="10" fill="#ccc" stroke="#999"/><text x="24" y="746" font-size="7" fill="#222">&gt;_</text>
<path d="M36 742h4l-2 3z" fill="#777"/>
<text x="48" y="746" font-size="10" fill="#aaa">键入命令</text>

<rect x="0" y="751" width="1000" height="17" fill="url(#gc)"/>
<path d="M0 750.500h1000" stroke="#333"/>
<text x="8" y="766" font-size="8.500" fill="#909090">2021.2844, 1940.6855, 0.0000</text>
<use href="#tab" x="167" y="751"/><use href="#tab" x="185" y="751"/><use href="#tab" x="203" y="751"/><use href="#tabb" x="218" y="751"/><use href="#tab" x="236" y="751"/><use href="#tabb" x="252" y="751"/><use href="#tabb" x="270" y="751"/><use href="#tabb" x="287" y="751"/><use href="#tabb" x="304" y="751"/><use href="#tab" x="321" y="751"/><use href="#tab" x="338" y="751"/><use href="#tabb" x="355" y="751"/><use href="#tab" x="371" y="751"/><use href="#tab" x="388" y="751"/><use href="#tab" x="406" y="751"/>
<path d="M167 760h16M175 754v13" stroke="#444"/><circle cx="175" cy="760" r="2" fill="#d07030"/>
<use href="#grid" x="186" y="752"/>
<path d="M204 754h14v12h-14z" fill="#ddd" stroke="#444"/><path d="M204 758h14M204 762h14M208 754v12M213 754v12" stroke="#555"/>
<path d="M222 755v10h11" fill="none" stroke="#246" stroke-width="1.500"/>
<circle cx="244" cy="761" r="4" fill="none" stroke="#555"/><path d="M244 761l5-4" stroke="#555"/>
<rect x="255" y="755" width="11" height="11" fill="#fff" stroke="#555"/><circle cx="255" cy="755" r="2" fill="#e07030"/>
<path d="M273 763l3-8h8v8l-3 3h-8z" fill="#fff" stroke="#555"/><circle cx="273" cy="765" r="2" fill="none" stroke="#c06040"/>
<path d="M290 765l9-8M290 765h10" fill="none" stroke="#335" stroke-width="1.200"/>
<path d="M308 766V755M308 766h11M308 766l9-9" fill="none" stroke="#555"/><circle cx="317" cy="757" r="1.500" fill="#e08030"/>
<path d="M325 762h12" stroke="#444" stroke-width="1.500"/><circle cx="330" cy="760" r="1.500" fill="#333"/>
<path d="M347 754v12M341 760h12" stroke="#111" stroke-width="2"/>
<rect x="357" y="754" width="14" height="13" fill="#5c9ee0" stroke="#2a70b8"/>
<rect x="375" y="755" width="9" height="11" fill="#fff" stroke="#333"/><path d="M380 755v11" stroke="#333"/>
<path d="M392 754l4 4M393 759h4v7h7v-7h-7z" fill="#5cb84c" stroke="#356"/>
<path d="M415 754v13M408 760h13" stroke="#fff" stroke-width="5"/><path d="M412 754h6v4h3v5h-3v4h-6v-4h-3v-5h3z" fill="none" stroke="#667"/>

<rect x="744" y="752" width="58" height="16" fill="#b5b5b5"/>
<text x="746" y="765" font-size="10" font-weight="bold" fill="#222">模型</text>
<rect x="770" y="754" width="12" height="10" fill="#ddd" stroke="#444"/><path d="M773 756l5 5h-5z" fill="#333"/><path d="M770 767h12" stroke="#555" stroke-width="1.500"/>
<rect x="786" y="754" width="14" height="9" fill="#fff" stroke="#444"/><path d="M793 754v9M786 767h14" stroke="#444"/>
<rect x="802" y="752" width="14" height="16" fill="#7e7e7e"/>
<rect x="816" y="752" width="66" height="16" fill="#b5b5b5"/>
<use href="#ca" x="815" y="752"/>
<text x="831" y="765" font-size="10" fill="#222" font-family="Liberation Serif">1:1</text>
<path d="M849 758h6l-3 3z" fill="#222"/>
<use href="#ca" x="858" y="752"/><circle cx="870" cy="762" r="2.500" fill="#e8b020"/>
<use href="#ca" x="874" y="752" opacity=".5"/>
<rect x="895" y="752" width="105" height="16" fill="#ababab"/>
<use href="#gear" x="897" y="752"/>
<path d="M917 758h8v9h-8z" fill="#f4f4f4" stroke="#444"/><path d="M923 757v-3h5v4" fill="none" stroke="#444"/>
<rect x="933" y="755" width="12" height="8" fill="#cfe3f5" stroke="#557"/><circle cx="942" cy="763" r="2" fill="#3a88d0"/>
<rect x="949" y="754" width="20" height="14" fill="#888"/><circle cx="959" cy="759" r="4" fill="#f0da60"/><rect x="957.500" y="763" width="3" height="4" fill="#555"/>
<path d="M976 761h5l-2.500 3z" fill="#111"/>
<rect x="985" y="755" width="10" height="11" fill="#ddd" stroke="#333"/>
</svg>
</body></html>
